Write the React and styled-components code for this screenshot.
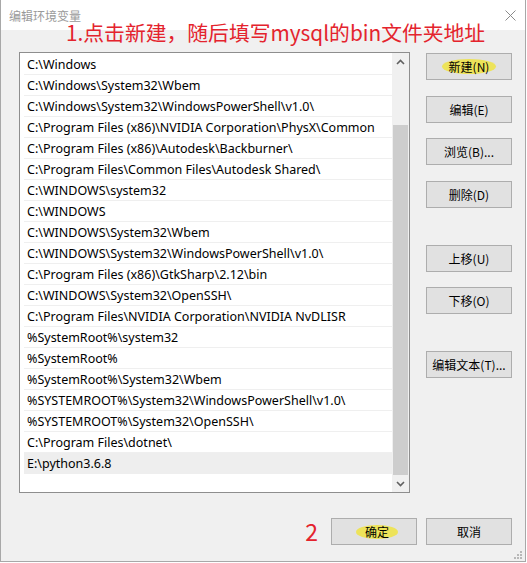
import React from 'react';
import styled, { createGlobalStyle } from 'styled-components';

const Global = createGlobalStyle`
  html, body { margin: 0; padding: 0; background: #ffffff; }
  body { font-family: "Noto Sans", "Noto Sans CJK SC", sans-serif; }
`;

const UI_FONT = `"Noto Sans", "Noto Sans CJK SC", sans-serif`;
const CJK_FONT = `"Noto Sans CJK SC", "Noto Sans", sans-serif`;

const Window = styled.div`
  position: relative;
  width: 526px;
  height: 562px;
  box-sizing: border-box;
  background: #f0f0f0;
  border-left: 1px solid #a8a8a8;
  border-right: 1px solid #a8a8a8;
  border-bottom: 1px solid #a8a8a8;
  display: flex;
  flex-direction: column;
  font-family: ${UI_FONT};
  font-size: 12px;
  color: #000;
`;

const TitleBar = styled.div`
  height: 30px;
  flex: none;
  background: #ffffff;
  display: flex;
  align-items: center;
  justify-content: space-between;
  padding: 0 9px 0 8px;
`;

const Title = styled.span`
  font-family: ${CJK_FONT};
  font-size: 12px;
  color: #9a9a9a;
`;

const CloseIcon = () => (
  <svg width="11" height="11" viewBox="0 0 11 11">
    <path d="M0.5 0.5 L10.5 10.5 M10.5 0.5 L0.5 10.5" stroke="#8a8a8a" strokeWidth="1" fill="none" />
  </svg>
);

const Annotation = styled.div`
  position: absolute;
  left: 65px;
  top: 16px;
  font-family: ${CJK_FONT};
  font-size: 20.8px;
  line-height: 32px;
  color: #e4232d;
  white-space: nowrap;
`;

const Body = styled.div`
  display: flex;
  gap: 16px;
  padding: 22px 0 0 18px;
`;

const ListBox = styled.div`
  width: 391px;
  height: 441px;
  box-sizing: border-box;
  border: 1px solid #8e8e8e;
  background: #ffffff;
  display: flex;
`;

const Rows = styled.div`
  flex: 1;
  padding: 1px 0 0 4px;
  display: flex;
  flex-direction: column;
`;

const Row = styled.div`
  height: 21px;
  box-sizing: border-box;
  border-bottom: 1px solid ${p => (p.$selected ? '#eeeeee' : '#efefef')};
  background: ${p => (p.$selected ? '#eeeeee' : '#ffffff')};
  padding-left: 3px;
  display: flex;
  align-items: center;
  white-space: nowrap;
  overflow: hidden;
  font-size: 12.5px;
`;

const ScrollBar = styled.div`
  width: 17px;
  flex: none;
  background: #f0f0f0;
  display: flex;
  flex-direction: column;
`;

const ArrowBox = styled.div`
  height: 17px;
  flex: none;
  display: flex;
  align-items: center;
  justify-content: center;
`;

const Track = styled.div`
  flex: 1;
  display: flex;
  flex-direction: column;
  justify-content: flex-end;
  align-items: center;
`;

const Thumb = styled.div`
  width: 15px;
  height: ${p => p.$h}px;
  background: #cdcdcd;
`;

const Chevron = ({ up }) => (
  <svg width="9" height="6" viewBox="0 0 9 6">
    <path
      d={up ? 'M1 5 L4.5 1.5 L8 5' : 'M1 1 L4.5 4.5 L8 1'}
      stroke="#606060"
      strokeWidth="1.6"
      fill="none"
    />
  </svg>
);

const SideCol = styled.div`
  width: 86px;
  padding-top: 1px;
  display: flex;
  flex-direction: column;
  gap: 15.67px;
`;

const Button = styled.div`
  width: 86px;
  height: 27px;
  flex: none;
  box-sizing: border-box;
  margin-top: ${p => p.$mt || 0}px;
  border: 1px solid #adadad;
  background: #e1e1e1;
  display: flex;
  align-items: center;
  justify-content: center;
  font-family: ${CJK_FONT};
  font-size: 12px;
  color: #000;
  white-space: nowrap;
`;

const Mark = styled.span`
  display: inline-flex;
  align-items: center;
  justify-content: center;
  height: ${p => p.$h}px;
  padding: 0 ${p => p.$px}px;
  margin-left: ${p => p.$shift || 0}px;
  border-radius: 50%;
  background: #ede35a;
`;

const Footer = styled.div`
  display: flex;
  justify-content: flex-end;
  align-items: center;
  gap: 9px;
  padding: 25px 13px 0 0;
`;

const StepNum = styled.span`
  font-family: ${CJK_FONT};
  font-size: 23px;
  line-height: 27px;
  color: #e4232d;
  margin-right: 4px;
`;

const Grip = styled.svg`
  position: absolute;
  right: 3px;
  bottom: 2px;
`;

const paths = [
  'C:\\Windows',
  'C:\\Windows\\System32\\Wbem',
  'C:\\Windows\\System32\\WindowsPowerShell\\v1.0\\',
  'C:\\Program Files (x86)\\NVIDIA Corporation\\PhysX\\Common',
  'C:\\Program Files (x86)\\Autodesk\\Backburner\\',
  'C:\\Program Files\\Common Files\\Autodesk Shared\\',
  'C:\\WINDOWS\\system32',
  'C:\\WINDOWS',
  'C:\\WINDOWS\\System32\\Wbem',
  'C:\\WINDOWS\\System32\\WindowsPowerShell\\v1.0\\',
  'C:\\Program Files (x86)\\GtkSharp\\2.12\\bin',
  'C:\\WINDOWS\\System32\\OpenSSH\\',
  'C:\\Program Files\\NVIDIA Corporation\\NVIDIA NvDLISR',
  '%SystemRoot%\\system32',
  '%SystemRoot%',
  '%SystemRoot%\\System32\\Wbem',
  '%SYSTEMROOT%\\System32\\WindowsPowerShell\\v1.0\\',
  '%SYSTEMROOT%\\System32\\OpenSSH\\',
  'C:\\Program Files\\dotnet\\',
  'E:\\python3.6.8',
];

export default function App() {
  return (
    <>
      <Global />
      <Window>
        <TitleBar>
          <Title>编辑环境变量</Title>
          <CloseIcon />
        </TitleBar>
        <Annotation>1.点击新建，随后填写mysql的bin文件夹地址</Annotation>
        <Body>
          <ListBox>
            <Rows>
              {paths.map((p, i) => (
                <Row key={i} $selected={i === paths.length - 1}>{p}</Row>
              ))}
            </Rows>
            <ScrollBar>
              <ArrowBox><Chevron up /></ArrowBox>
              <Track><Thumb $h={350} /></Track>
              <ArrowBox><Chevron /></ArrowBox>
            </ScrollBar>
          </ListBox>
          <SideCol>
            <Button><Mark $h={15} $px={7}>新建(N)</Mark></Button>
            <Button>编辑(E)</Button>
            <Button>浏览(B)...</Button>
            <Button>删除(D)</Button>
            <Button $mt={21}>上移(U)</Button>
            <Button>下移(O)</Button>
            <Button $mt={21}>编辑文本(T)...</Button>
          </SideCol>
        </Body>
        <Footer>
          <StepNum>2</StepNum>
          <Button><Mark $h={14} $px={9} $shift={6}>确定</Mark></Button>
          <Button>取消</Button>
        </Footer>
        <Grip width="8" height="8" viewBox="0 0 8 8">
          {[[6, 0], [6, 3], [3, 3], [6, 6], [3, 6], [0, 6]].map(([x, y], i) => (
            <rect key={i} x={x} y={y} width="2" height="2" fill="#b8b8b8" />
          ))}
        </Grip>
      </Window>
    </>
  );
}
